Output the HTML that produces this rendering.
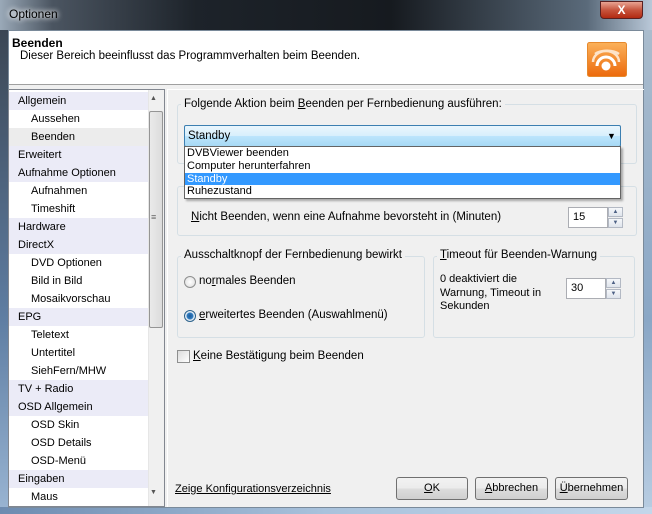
<!DOCTYPE html>
<html><head><style>
*{margin:0;padding:0;box-sizing:border-box}
body{width:652px;height:514px;overflow:hidden;font-family:"Liberation Sans",sans-serif;font-size:11px;color:#000;background:#6d8bb0;position:relative}
.a{position:absolute}
.title{left:0;top:0;width:652px;height:32px;background:linear-gradient(90deg,#9aa9b8 0%,#4b5561 8%,#1d232a 30%,#161a1f 60%,#5a6a7a 90%,#b9c8d8 100%)}
.frameL{left:0;top:30px;width:8px;height:484px;background:linear-gradient(180deg,#3b4654,#5f7ea3 60%,#9ab5d3)}
.frameR{right:0;top:30px;width:8px;height:484px;background:linear-gradient(180deg,#aabccd,#8aa7c6 60%,#b8cde2)}
.frameB{left:0;top:507px;width:652px;height:7px;background:linear-gradient(90deg,#6d8bb0,#a9c2dc,#c3d6ea)}
.client{left:8px;top:30px;width:636px;height:478px;background:#f0f0f0;border:1px solid #7a8a9a}
.hdr{left:9px;top:31px;width:634px;height:54px;background:#fff;border-bottom:1px solid #a0a0a0}
.tree{left:8px;top:89px;width:157px;height:418px;background:#fff;border:1px solid #828790}
.it{position:absolute;left:0;width:139px;height:18px;line-height:18px;padding-left:9px;white-space:nowrap}
.top{background:#ebebf7}
.sub{padding-left:22px}
.sb{left:148px;top:90px;width:16px;height:416px;background:#f0f0f0;border-left:1px solid #e6e6e6}
.grp{border:1px solid #d5dfe5;border-radius:3px}
.lg{background:#f0f0f0;padding:0 3px;white-space:nowrap}
.btn{height:23px;border:1px solid #707070;border-radius:3px;background:linear-gradient(#f2f2f2 0%,#ebebeb 50%,#dddddd 51%,#cfcfcf 100%);text-align:center;line-height:21px}
.spin{width:40px;height:21px;background:#fff;border:1px solid #abadb3;padding-left:4px;line-height:19px}
.arr{width:15px;height:21px}
.arr div{height:10px;border:1px solid #b3b9c4;background:linear-gradient(#f5f7fa,#dfe4ec);margin-bottom:1px;font-size:6px;text-align:center;line-height:8px;color:#4d6185}
u{text-decoration:underline}
</style></head><body>
<div class="a title"></div>
<div class="a" style="left:9px;top:7px;font-size:12px;color:#000;text-shadow:0 0 6px #fff,0 0 6px #fff">Optionen</div>
<div class="a" style="left:600px;top:1px;width:43px;height:18px;border:1px solid #5a2020;border-radius:0 0 4px 4px;background:linear-gradient(#e8a493,#c7553e 50%,#b22a12);color:#fff;font-weight:bold;text-align:center;font-size:12px;line-height:16px">X</div>
<div class="a frameL"></div><div class="a frameR"></div><div class="a frameB"></div>
<div class="a client"></div>
<div class="a hdr"></div>
<div class="a" style="left:12px;top:36px;font-weight:bold;font-size:12px">Beenden</div>
<div class="a" style="left:20px;top:50px;font-size:11.5px">Dieser Bereich beeinflusst das Programmverhalten beim Beenden.</div>
<svg class="a" style="left:587px;top:42px" width="40" height="35" viewBox="0 0 40 35">
<defs><linearGradient id="o" x1="0" y1="0" x2="0" y2="1"><stop offset="0" stop-color="#fbb15a"/><stop offset="1" stop-color="#ec6a0c"/></linearGradient></defs>
<rect x="0.5" y="0.5" width="39" height="34" rx="2" fill="url(#o)" stroke="#e6892d"/>
<circle cx="19" cy="24" r="4.5" fill="#fff"/>
<path d="M10 24a9 9 0 0 1 18 0" fill="none" stroke="#fff" stroke-width="3"/>
<path d="M6 20a13 11 0 0 1 26 0" fill="none" stroke="#fde3c8" stroke-width="2.5"/>
<path d="M8 12a15 8 0 0 1 24 0" fill="none" stroke="#fde3c8" stroke-width="2.5"/>
</svg>
<div class="a tree">
<div class="it top" style="top:2px">Allgemein</div>
<div class="it sub" style="top:20px">Aussehen</div>
<div class="it sub" style="top:38px;background:#ececec">Beenden</div>
<div class="it top" style="top:56px">Erweitert</div>
<div class="it top" style="top:74px">Aufnahme Optionen</div>
<div class="it sub" style="top:92px">Aufnahmen</div>
<div class="it sub" style="top:110px">Timeshift</div>
<div class="it top" style="top:128px">Hardware</div>
<div class="it top" style="top:146px">DirectX</div>
<div class="it sub" style="top:164px">DVD Optionen</div>
<div class="it sub" style="top:182px">Bild in Bild</div>
<div class="it sub" style="top:200px">Mosaikvorschau</div>
<div class="it top" style="top:218px">EPG</div>
<div class="it sub" style="top:236px">Teletext</div>
<div class="it sub" style="top:254px">Untertitel</div>
<div class="it sub" style="top:272px">SiehFern/MHW</div>
<div class="it top" style="top:290px">TV + Radio</div>
<div class="it top" style="top:308px">OSD Allgemein</div>
<div class="it sub" style="top:326px">OSD Skin</div>
<div class="it sub" style="top:344px">OSD Details</div>
<div class="it sub" style="top:362px">OSD-Menü</div>
<div class="it top" style="top:380px">Eingaben</div>
<div class="it sub" style="top:398px">Maus</div>
</div>
<div class="a sb"></div>
<div class="a" style="left:150px;top:95px;font-size:7px;color:#555">▲</div>
<div class="a" style="left:150px;top:489px;font-size:7px;color:#555">▼</div>
<div class="a" style="left:149px;top:111px;width:14px;height:217px;border:1px solid #959595;border-radius:2px;background:linear-gradient(90deg,#eaeaea,#dcdcdc)"></div>
<div class="a" style="left:151px;top:212px;font-size:9px;color:#666">≡</div>
<div class="a" style="left:167px;top:89px;width:477px;height:418px;border-left:1px solid #d0d0d0;border-top:1px solid #fff"></div>
<div class="a" style="left:167px;top:89px;width:1px;height:418px;background:#fff"></div>

<div class="a grp" style="left:177px;top:104px;width:460px;height:60px"></div>
<div class="a lg" style="left:181px;top:98px;font-size:11.5px">Folgende Aktion beim <u>B</u>eenden per Fernbedienung ausführen:</div>
<div class="a grp" style="left:177px;top:186px;width:460px;height:50px"></div>
<div class="a" style="left:191px;top:211px;font-size:11.5px"><u>N</u>icht Beenden, wenn eine Aufnahme bevorsteht in (Minuten)</div>
<div class="a spin" style="left:568px;top:207px">15</div>
<div class="a arr" style="left:608px;top:207px"><div>▲</div><div>▼</div></div>

<div class="a" style="left:184px;top:125px;width:437px;height:22px;border:1px solid #3c7fb1;border-radius:2px;background:linear-gradient(#eaf6fd,#d7effc 50%,#bce5fc 51%,#a7d9f5);padding-left:3px;line-height:20px;font-size:11.5px">Standby</div>
<div class="a" style="left:607px;top:131px;font-size:9px">▼</div>
<div class="a" style="left:184px;top:146px;width:437px;height:53px;background:#fff;border:1px solid #646464;box-shadow:2px 2px 2px rgba(0,0,0,.3);font-size:11px;line-height:12.75px">
<div style="padding-left:2px">DVBViewer beenden</div>
<div style="padding-left:2px">Computer herunterfahren</div>
<div style="padding-left:2px;background:#3399ff;color:#fff">Standby</div>
<div style="padding-left:2px">Ruhezustand</div>
</div>

<div class="a grp" style="left:177px;top:256px;width:248px;height:82px"></div>
<div class="a lg" style="left:181px;top:249px;font-size:11.5px">Ausschaltknopf der Fernbedienung bewirkt</div>
<div class="a" style="left:184px;top:276px;width:12px;height:12px;border-radius:50%;border:1px solid #8e8f8f;background:radial-gradient(#fff,#dcdcdc)"></div>
<div class="a" style="left:199px;top:275px;font-size:11.5px">no<u>r</u>males Beenden</div>
<div class="a" style="left:184px;top:310px;width:12px;height:12px;border-radius:50%;border:1px solid #2c628b;background:radial-gradient(#1e5a9a 0,#2d7bc0 3px,#e6eef6 4px)"></div>
<div class="a" style="left:199px;top:309px;font-size:11.5px"><u>e</u>rweitertes Beenden (Auswahlmenü)</div>

<div class="a grp" style="left:433px;top:256px;width:202px;height:82px"></div>
<div class="a lg" style="left:437px;top:249px;font-size:11.5px"><u>T</u>imeout für Beenden-Warnung</div>
<div class="a" style="left:440px;top:273px;font-size:11px;line-height:13.5px">0 deaktiviert die<br>Warnung, Timeout in<br>Sekunden</div>
<div class="a spin" style="left:566px;top:278px">30</div>
<div class="a arr" style="left:606px;top:278px"><div>▲</div><div>▼</div></div>

<div class="a" style="left:177px;top:350px;width:13px;height:13px;border:1px solid #8e8f8f;background:linear-gradient(135deg,#dcdcdc,#fff)"></div>
<div class="a" style="left:193px;top:350px;font-size:11.5px"><u>K</u>eine Bestätigung beim Beenden</div>

<div class="a" style="left:175px;top:483px;font-size:11px;text-decoration:underline">Zeige Konfigurationsverzeichnis</div>
<div class="a btn" style="left:396px;top:477px;width:72px"><u>O</u>K</div>
<div class="a btn" style="left:475px;top:477px;width:73px"><u>A</u>bbrechen</div>
<div class="a btn" style="left:555px;top:477px;width:73px"><u>Ü</u>bernehmen</div>
</body></html>
